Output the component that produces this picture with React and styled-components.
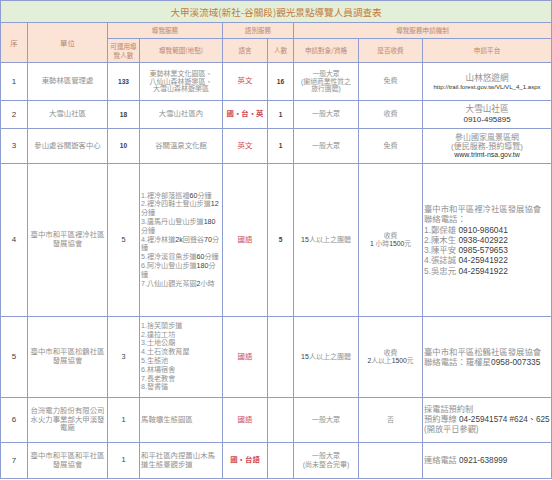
import React from "react";
import styled, { createGlobalStyle } from "styled-components";

const Global = createGlobalStyle`
  html, body { margin: 0; padding: 0; background: #ffffff; }
  body { font-family: "Liberation Sans", "Noto Sans CJK TC", sans-serif; }
`;

const Sheet = styled.table`
  border-collapse: collapse;
  table-layout: fixed;
  width: 552px;
  border: 1px solid #7d8cc4;
`;

const Col = styled.col`
  width: ${(p) => p.$w}px;
`;

const Row = styled.tr`
  height: ${(p) => p.$h}px;
`;

const TitleCell = styled.th`
  background: #e3efd9;
  color: #c47a3c;
  font-family: "Noto Sans CJK TC", sans-serif;
  font-weight: 400;
  font-size: 9.6px;
  border: 1px solid #8f9dd0;
  padding: 0;
  text-align: center;
`;

const HeadCell = styled.th`
  background: #fbe3d6;
  color: #b98a74;
  font-family: "Noto Sans CJK TC", sans-serif;
  font-weight: 400;
  font-size: ${(p) => p.$size || 6.6}px;
  line-height: 1.3;
  border: 1px solid #8f9dd0;
  padding: 0 1px;
  text-align: center;
  vertical-align: middle;
`;

const Cell = styled.td`
  border: 1px solid #8f9dd0;
  padding: 0 1px;
  text-align: ${(p) => p.$align || "center"};
  vertical-align: middle;
  color: ${(p) => (p.$tone === "dark" ? "#404040" : p.$tone === "red" ? "#cc4a56" : "#929292")};
  font-size: ${(p) => p.$size || 7.4}px;
  line-height: ${(p) => p.$lh || 1.2};
  font-family: "Liberation Sans", "Noto Sans CJK TC", sans-serif;
  font-weight: ${(p) => (p.$bold ? 700 : 400)};
  overflow: hidden;
`;

const Line = styled.div`
  white-space: nowrap;
  color: ${(p) => (p.$dark ? "#333333" : "inherit")};
  font-size: ${(p) => (p.$size ? `${p.$size}px` : "inherit")};
`;

const Num = styled.span`
  color: #404040;
`;

const widths = [27, 80, 32, 83, 45, 26, 65, 64, 129];

const ListItems = ({ items }) =>
  items.map((t, i) => <Line key={i}>{t}</Line>);

export default function App() {
  return (
    <>
      <Global />
      <Sheet>
        <colgroup>
          {widths.map((w, i) => (
            <Col key={i} $w={w} />
          ))}
        </colgroup>
        <tbody>
          <Row $h={22}>
            <TitleCell colSpan={9}>大甲溪流域(新社-谷關段)觀光景點導覽人員調查表</TitleCell>
          </Row>
          <Row $h={16}>
            <HeadCell rowSpan={2} $size={7.4}>序</HeadCell>
            <HeadCell rowSpan={2} $size={7.4}>單位</HeadCell>
            <HeadCell colSpan={2}>導覽服務</HeadCell>
            <HeadCell colSpan={2}>語別服務</HeadCell>
            <HeadCell colSpan={3}>導覽服務申請機制</HeadCell>
          </Row>
          <Row $h={24}>
            <HeadCell>
              <Line>可運用導</Line>
              <Line>覽人數</Line>
            </HeadCell>
            <HeadCell>導覽範圍(地點)</HeadCell>
            <HeadCell>語言</HeadCell>
            <HeadCell>人數</HeadCell>
            <HeadCell>申請對象/資格</HeadCell>
            <HeadCell>是否收費</HeadCell>
            <HeadCell>申請平台</HeadCell>
          </Row>

          <Row $h={38}>
            <Cell $tone="dark" $size={8}>1</Cell>
            <Cell>東勢林區管理處</Cell>
            <Cell $tone="dark" $size={6.6} $bold>133</Cell>
            <Cell $size={7} $lh={1.12}>
              <Line>東勢林業文化園區、</Line>
              <Line>八仙山森林遊樂區、</Line>
              <Line>大雪山森林遊樂區</Line>
            </Cell>
            <Cell $tone="red">英文</Cell>
            <Cell $tone="dark" $size={6.6} $bold>16</Cell>
            <Cell $size={6.8} $lh={1.12}>
              <Line>一般大眾</Line>
              <Line>(謝絕商業性質之</Line>
              <Line>旅行團體)</Line>
            </Cell>
            <Cell $size={7}>免費</Cell>
            <Cell $size={8.6} $lh={1.2}>
              <Line>山林悠遊網</Line>
              <Line $dark $size={6.1}>http://trail.forest.gov.tw/VL/VL_4_1.aspx</Line>
            </Cell>
          </Row>

          <Row $h={28}>
            <Cell $tone="dark" $size={8}>2</Cell>
            <Cell>大雪山社區</Cell>
            <Cell $tone="dark" $size={6.6} $bold>18</Cell>
            <Cell>大雪山社區內</Cell>
            <Cell $tone="red" $bold>國・台・英</Cell>
            <Cell $tone="dark" $size={6.6} $bold>1</Cell>
            <Cell $size={7}>一般大眾</Cell>
            <Cell $size={7}>收費</Cell>
            <Cell $size={8.6} $lh={1.15}>
              <Line>大雪山社區</Line>
              <Line $dark $size={8}>0910-495895</Line>
            </Cell>
          </Row>

          <Row $h={35}>
            <Cell $tone="dark" $size={8}>3</Cell>
            <Cell>參山處谷關遊客中心</Cell>
            <Cell $tone="dark" $size={6.6} $bold>10</Cell>
            <Cell>谷關溫泉文化館</Cell>
            <Cell $tone="red">英文</Cell>
            <Cell $tone="dark" $size={6.6} $bold>1</Cell>
            <Cell $size={7}>一般大眾</Cell>
            <Cell $size={7}>免費</Cell>
            <Cell $size={8} $lh={1.15}>
              <Line>參山國家風景區網</Line>
              <Line>(便民服務-預約導覽)</Line>
              <Line $dark $size={7}>www.trimt-nsa.gov.tw</Line>
            </Cell>
          </Row>

          <Row $h={153}>
            <Cell $tone="dark" $size={8}>4</Cell>
            <Cell $lh={1.15}>
              <Line>臺中市和平區裡冷社區</Line>
              <Line>發展協會</Line>
            </Cell>
            <Cell $tone="dark" $size={7.4}>5</Cell>
            <Cell $align="left" $size={7.1} $lh={1.24}>
              <ListItems
                items={[
                  <>1.裡冷部落巡禮<Num>60</Num>分鐘</>,
                  <>2.裡冷四鞋士登山步道<Num>12</Num></>,
                  "分鐘",
                  <>3.唐馬丹山登山步道<Num>180</Num></>,
                  "分鐘",
                  <>4.裡冷林道<Num>2k</Num>回聲谷<Num>70</Num>分</>,
                  "鐘",
                  <>5.裡冷溪賞魚步道<Num>60</Num>分鐘</>,
                  <>6.阿冷山登山步道<Num>180</Num>分</>,
                  "鐘",
                  <>7.八仙山觀光茶園<Num>2</Num>小時</>,
                ]}
              />
            </Cell>
            <Cell $tone="red">國語</Cell>
            <Cell $tone="dark" $size={6.6} $bold>5</Cell>
            <Cell $size={7}><Num>15</Num>人以上之團體</Cell>
            <Cell $size={6.8} $lh={1.2}>
              <Line>收費</Line>
              <Line><Num>1</Num> 小時<Num>1500</Num>元</Line>
            </Cell>
            <Cell $align="left" $size={8.4} $lh={1.22}>
              <Line>臺中市和平區裡冷社區發展協會</Line>
              <Line>聯絡電話：</Line>
              <Line>1.鄭保雄 <Num>0910-986041</Num></Line>
              <Line>2.陳木生 <Num>0938-402922</Num></Line>
              <Line>3.陳平安 <Num>0985-579653</Num></Line>
              <Line>4.張誌誠 <Num>04-25941922</Num></Line>
              <Line>5.吳忠元 <Num>04-25941922</Num></Line>
            </Cell>
          </Row>

          <Row $h={81}>
            <Cell $tone="dark" $size={8}>5</Cell>
            <Cell $lh={1.15}>
              <Line>臺中市和平區松鶴社區</Line>
              <Line>發展協會</Line>
            </Cell>
            <Cell $tone="dark" $size={7.4}>3</Cell>
            <Cell $align="left" $size={7.1} $lh={1.24}>
              <ListItems
                items={[
                  "1.捨芙蘭步道",
                  "2.達拉工坊",
                  "3.土地公廟",
                  "4.土石流教育屋",
                  "5.生態池",
                  "6.林場宿舍",
                  "7.長老教會",
                  "8.發書循",
                ]}
              />
            </Cell>
            <Cell $tone="red">國語</Cell>
            <Cell />
            <Cell $size={7}><Num>15</Num>人以上之團體</Cell>
            <Cell $size={6.8} $lh={1.2}>
              <Line>收費</Line>
              <Line><Num>2</Num>人以上<Num>1500</Num>元</Line>
            </Cell>
            <Cell $align="left" $size={8.4} $lh={1.22}>
              <Line>臺中市和平區松鶴社區發展協會</Line>
              <Line>聯絡電話：羅權星<Num>0958-007335</Num></Line>
            </Cell>
          </Row>

          <Row $h={45}>
            <Cell $tone="dark" $size={8}>6</Cell>
            <Cell $lh={1.15}>
              <Line>台灣電力股份有限公司</Line>
              <Line>水火力事業部大甲溪發</Line>
              <Line>電廠</Line>
            </Cell>
            <Cell $tone="dark" $size={7.4}>1</Cell>
            <Cell $align="left">馬鞍壩生態園區</Cell>
            <Cell $tone="red">國語</Cell>
            <Cell />
            <Cell $size={7}>一般大眾</Cell>
            <Cell $size={7}>否</Cell>
            <Cell $align="left" $size={8.2} $lh={1.22}>
              <Line>採電話預約制</Line>
              <Line>預約專線 <Num>04-25941574 #624、625</Num></Line>
              <Line>(開放平日參觀)</Line>
            </Cell>
          </Row>

          <Row $h={36}>
            <Cell $tone="dark" $size={8}>7</Cell>
            <Cell $lh={1.15}>
              <Line>臺中市和平區和平社區</Line>
              <Line>發展協會</Line>
            </Cell>
            <Cell $tone="dark" $size={7.4}>1</Cell>
            <Cell $align="left" $lh={1.2}>
              <Line>和平社區內捏蕭山木馬</Line>
              <Line>道生態景觀步道</Line>
            </Cell>
            <Cell $tone="red" $bold>國・台語</Cell>
            <Cell />
            <Cell $size={7} $lh={1.15}>
              <Line>一般大眾</Line>
              <Line>(尚未整合完畢)</Line>
            </Cell>
            <Cell />
            <Cell $align="left" $size={8.2}>
              <Line>連絡電話 <Num>0921-638999</Num></Line>
            </Cell>
          </Row>
        </tbody>
      </Sheet>
    </>
  );
}
